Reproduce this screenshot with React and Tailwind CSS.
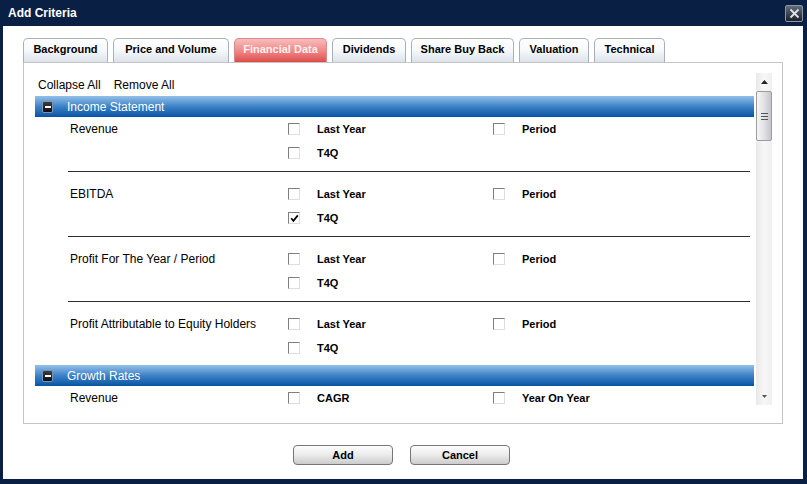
import React from "react";

const font = "font-['Liberation_Sans',Arial,sans-serif]";

function Checkbox({ checked }) {
  return (
    <span className="w-[12px] h-[12px] shrink-0 border border-t-[#7f7f7f] border-l-[#7f7f7f] border-r-[#dedede] border-b-[#dedede] bg-white flex items-center justify-center">
      {checked && (
        <svg width="9" height="9" viewBox="0 0 9 9">
          <path d="M1.2 4.2 L3.4 6.8 L7.8 1.4" fill="none" stroke="#000" strokeWidth="1.7" />
        </svg>
      )}
    </span>
  );
}

function Option({ label, checked }) {
  return (
    <div className="flex items-center">
      <Checkbox checked={checked} />
      <span className="ml-[17px] text-[11px] font-bold text-black leading-none">{label}</span>
    </div>
  );
}

function Row({ label, a, b, checkedA, checkedB }) {
  return (
    <div className="flex h-[24px] shrink-0 items-center">
      <div className="w-[220px] pl-[2px] text-[12px] text-black leading-none">{label}</div>
      <div className="w-[205px]">{a && <Option label={a} checked={checkedA} />}</div>
      <div>{b && <Option label={b} checked={checkedB} />}</div>
    </div>
  );
}

function SectionHeader({ title }) {
  return (
    <div className="h-[21px] shrink-0 flex items-center bg-linear-to-b from-[#93c0e9] via-[#3d82c6] to-[#0354a4]">
      <span className="ml-[7px] w-[11px] h-[12px] rounded-[2px] border border-[#7d93ad] bg-linear-to-b from-[#3a3f46] to-[#0c0e12] flex items-center justify-center">
        <span className="w-[6px] h-[2px] bg-white" />
      </span>
      <span className="ml-[14px] text-[12px] text-white leading-none">{title}</span>
    </div>
  );
}

const income = [
  { label: "Revenue", checked: [false, false, false] },
  { label: "EBITDA", checked: [false, false, true] },
  { label: "Profit For The Year / Period", checked: [false, false, false] },
  { label: "Profit Attributable to Equity Holders", checked: [false, false, false] },
];

const tabs = [
  { name: "Background", w: 85 },
  { name: "Price and Volume", w: 116 },
  { name: "Financial Data", w: 93, active: true },
  { name: "Dividends", w: 74 },
  { name: "Share Buy Back", w: 103 },
  { name: "Valuation", w: 70 },
  { name: "Technical", w: 71 },
];

export default function App() {
  return (
    <div className={`${font} w-[807px] h-[484px] bg-[#0a1f44] flex flex-col overflow-hidden`}>
      {/* Title bar */}
      <div className="h-[26px] shrink-0 flex items-center pl-[8px] pr-[4px]">
        <span className="text-white font-bold text-[12px] leading-none">Add Criteria</span>
        <span className="ml-auto w-[18px] h-[17px] rounded-[2px] border border-[#8d97a6] bg-linear-to-b from-[#646c7a] to-[#1b212c] flex items-center justify-center">
          <svg width="11" height="11" viewBox="0 0 11 11">
            <path d="M1.5 1.5 L9.5 9.5 M9.5 1.5 L1.5 9.5" stroke="#dfe3e8" strokeWidth="1.8" />
          </svg>
        </span>
      </div>

      {/* Body */}
      <div className="flex-1 ml-[3px] mr-[4px] mb-[5px] bg-white flex flex-col pl-[20px] pt-[12px]">
        {/* Tabs */}
        <div className="flex gap-[5px] h-[24px] shrink-0">
          {tabs.map((t) => (
            <div
              key={t.name}
              style={{ width: t.w }}
              className={
                t.active
                  ? "h-[24px] pb-[2px] rounded-t-[5px] border border-b-0 border-[#d98a8a] bg-linear-to-b from-[#f8bcbc] via-[#f08a8a] to-[#dd4a4a] flex items-center justify-center text-[11px] font-bold text-[#fff0f0] leading-none"
                  : "h-[24px] pb-[2px] rounded-t-[5px] border border-b-0 border-[#a7b1bc] bg-linear-to-b from-white via-[#f6f8fa] to-[#dbe3eb] flex items-center justify-center text-[11px] font-bold text-black leading-none"
              }
            >
              {t.name}
            </div>
          ))}
        </div>

        {/* Panel */}
        <div className="w-[760px] h-[362px] shrink-0 border border-[#c4c4c4] pt-[10px] pl-[11px] pr-[10px] pb-[18px] flex gap-[2px]">
          {/* Scroll content */}
          <div className="w-[719px] h-full overflow-hidden flex flex-col">
            <div className="h-[23px] shrink-0 flex items-center pl-[3px] gap-[13px] text-[12px] text-black leading-none">
              <span>Collapse All</span>
              <span>Remove All</span>
            </div>
            <SectionHeader title="Income Statement" />
            {income.map((g, i) => (
              <div
                key={g.label}
                className={
                  "ml-[33px] mr-[4px] shrink-0 " +
                  (i === 0 ? "" : "pt-[10px] ") +
                  (i < income.length - 1 ? "pb-[6px] border-b border-[#2e2e2e]" : "pb-[5px]")
                }
              >
                <Row label={g.label} a="Last Year" b="Period" checkedA={g.checked[0]} checkedB={g.checked[1]} />
                <Row label="" a="T4Q" checkedA={g.checked[2]} />
              </div>
            ))}
            <SectionHeader title="Growth Rates" />
            <div className="ml-[33px] mr-[4px] shrink-0">
              <Row label="Revenue" a="CAGR" b="Year On Year" />
            </div>
          </div>

          {/* Scrollbar */}
          <div className="w-[16px] h-full bg-linear-to-r from-[#e9e9e9] via-[#f7f7f7] to-[#efefef] flex flex-col">
            <div className="h-[18px] flex items-center justify-center">
              <svg width="7" height="4" viewBox="0 0 7 4">
                <path d="M0 4 L3.5 0 L7 4 Z" fill="#222" />
              </svg>
            </div>
            <div className="h-[50px] rounded-[2px] border border-[#9c9c9c] bg-linear-to-r from-[#f6f6f6] via-[#e2e2e6] to-[#c4c4cc] flex flex-col items-center justify-center gap-[2px]">
              <span className="w-[7px] h-[1px] bg-[#555]" />
              <span className="w-[7px] h-[1px] bg-[#555]" />
              <span className="w-[7px] h-[1px] bg-[#555]" />
            </div>
            <div className="flex-1" />
            <div className="h-[18px] flex items-center justify-center">
              <svg width="5" height="3" viewBox="0 0 5 3">
                <path d="M0 0 L5 0 L2.5 3 Z" fill="#555" />
              </svg>
            </div>
          </div>
        </div>

        {/* Buttons */}
        <div className="w-[757px] mt-[21px] flex justify-center gap-[17px]">
          <button className="w-[100px] h-[20px] rounded-[4px] border border-[#767676] bg-linear-to-b from-[#fdfdfd] via-[#ebebeb] to-[#cbcbcb] text-[11px] font-bold text-black leading-none">
            Add
          </button>
          <button className="w-[100px] h-[20px] rounded-[4px] border border-[#767676] bg-linear-to-b from-[#fdfdfd] via-[#ebebeb] to-[#cbcbcb] text-[11px] font-bold text-black leading-none">
            Cancel
          </button>
        </div>
      </div>
    </div>
  );
}
